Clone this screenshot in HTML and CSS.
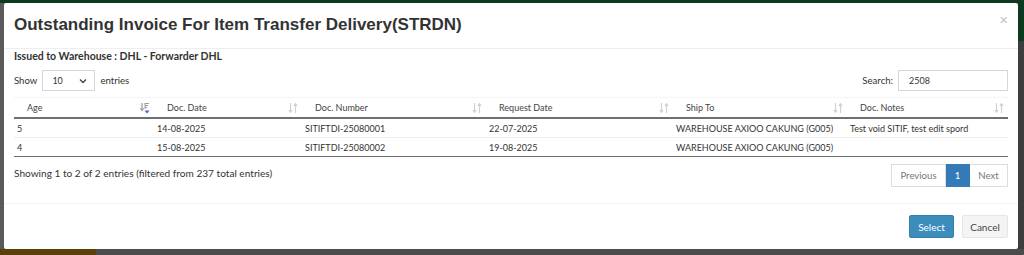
FILE: index.html
```html
<!DOCTYPE html>
<html>
<head>
<meta charset="utf-8">
<link rel="stylesheet" href="styles.css">
</head>
<body>
<div class="page">
  <div class="page-topbar"></div>
  <div class="page-mid">
    <div class="page-left"></div>
    <div class="page-right"><div class="page-right-top"></div></div>
  </div>
  <div class="page-bottom"><div class="page-brown"></div></div>
</div>

<div class="modal">
  <div class="modal-header">
    <h4 class="modal-title">Outstanding Invoice For Item Transfer Delivery(STRDN)</h4>
    <span class="close">×</span>
  </div>
  <div class="modal-body">
    <div class="issued">Issued to Warehouse : DHL - Forwarder DHL</div>
    <div class="controls">
      <div class="length">
        <span>Show</span>
        <div class="select"><span>10</span>
          <svg class="chev" width="8" height="6" viewBox="0 0 8 6"><path d="M1 1.5 L4 4.5 L7 1.5" fill="none" stroke="#444" stroke-width="1.4"/></svg>
        </div>
        <span>entries</span>
      </div>
      <div class="search">
        <span>Search:</span>
        <div class="input">2508</div>
      </div>
    </div>
    <table class="grid">
      <colgroup>
        <col style="width:140px"><col style="width:148px"><col style="width:184px"><col style="width:187px"><col style="width:174px"><col style="width:161px">
      </colgroup>
      <thead>
        <tr>
          <th><span>Age</span>
            <svg class="sort" width="10" height="12" viewBox="0 0 10 12"><path d="M2 1 V8" stroke="#9a9a9a" stroke-width="1.2"/><path d="M0.3 6.2 L2 8.6 L3.7 6.2" fill="none" stroke="#9a9a9a" stroke-width="1.1"/><path d="M5 1.5 H9 M5 3.5 H8 M5 5.5 H7 M5 1 V7" stroke="#9a9a9a" stroke-width="1"/><path d="M4.5 8.5 H9.5 L7 11.5 Z" fill="#4a5fd0"/></svg>
          </th>
          <th><span>Doc. Date</span><svg class="sort" width="10" height="12" viewBox="0 0 10 12"><path d="M2.5 1 V10 M0.8 8 L2.5 10.3 L4.2 8 M7.5 11 V2 M5.8 4 L7.5 1.7 L9.2 4" fill="none" stroke="#cfcfcf" stroke-width="1.1"/></svg></th>
          <th><span>Doc. Number</span><svg class="sort" width="10" height="12" viewBox="0 0 10 12"><path d="M2.5 1 V10 M0.8 8 L2.5 10.3 L4.2 8 M7.5 11 V2 M5.8 4 L7.5 1.7 L9.2 4" fill="none" stroke="#cfcfcf" stroke-width="1.1"/></svg></th>
          <th><span>Request Date</span><svg class="sort" width="10" height="12" viewBox="0 0 10 12"><path d="M2.5 1 V10 M0.8 8 L2.5 10.3 L4.2 8 M7.5 11 V2 M5.8 4 L7.5 1.7 L9.2 4" fill="none" stroke="#cfcfcf" stroke-width="1.1"/></svg></th>
          <th><span>Ship To</span><svg class="sort" width="10" height="12" viewBox="0 0 10 12"><path d="M2.5 1 V10 M0.8 8 L2.5 10.3 L4.2 8 M7.5 11 V2 M5.8 4 L7.5 1.7 L9.2 4" fill="none" stroke="#cfcfcf" stroke-width="1.1"/></svg></th>
          <th><span>Doc. Notes</span><svg class="sort" width="10" height="12" viewBox="0 0 10 12"><path d="M2.5 1 V10 M0.8 8 L2.5 10.3 L4.2 8 M7.5 11 V2 M5.8 4 L7.5 1.7 L9.2 4" fill="none" stroke="#cfcfcf" stroke-width="1.1"/></svg></th>
        </tr>
      </thead>
      <tbody>
        <tr>
          <td>5</td><td>14-08-2025</td><td>SITIFTDI-25080001</td><td>22-07-2025</td><td>WAREHOUSE AXIOO CAKUNG (G005)</td><td>Test void SITIF, test edit spord</td>
        </tr>
        <tr>
          <td>4</td><td>15-08-2025</td><td>SITIFTDI-25080002</td><td>19-08-2025</td><td>WAREHOUSE AXIOO CAKUNG (G005)</td><td></td>
        </tr>
      </tbody>
    </table>
    <div class="info-row">
      <div class="info">Showing 1 to 2 of 2 entries (filtered from 237 total entries)</div>
      <div class="pager">
        <span class="pg">Previous</span><span class="pg active">1</span><span class="pg">Next</span>
      </div>
    </div>
  </div>
  <div class="modal-footer">
    <button class="btn btn-primary">Select</button>
    <button class="btn btn-default">Cancel</button>
  </div>
</div>
</body>
</html>
```

FILE: styles.css
```css
html, body {
  margin: 0;
  padding: 0;
}
body {
  width: 1024px;
  height: 255px;
  overflow: hidden;
  background: #464646;
  font-family: "Lato", "Open Sans", sans-serif;
  font-size: 11px;
  color: #333;
  position: relative;
}
.page {
  height: 255px;
  display: flex;
  flex-direction: column;
}
.page-topbar {
  height: 3px;
  background: #0c3a1f;
}
.page-mid {
  flex: 1;
  display: flex;
  justify-content: space-between;
}
.page-left {
  width: 10px;
  background: #5a5a5a;
}
.page-right {
  width: 8px;
  background: #3d3d3d;
}
.page-right-top {
  height: 38px;
  background: #0c3a1f;
}
.page-bottom {
  height: 6px;
  background: #4b4b4b;
}
.page-brown {
  width: 96px;
  height: 6px;
  background: #5a3e0c;
}
.modal {
  position: absolute;
  left: 4px;
  top: 3px;
  width: 1014px;
  height: 246px;
  background: #fff;
  border-radius: 2px;
  display: flex;
  flex-direction: column;
}
.modal-header {
  height: 45px;
  border-bottom: 1px solid #eeeeee;
  display: flex;
  align-items: flex-start;
  justify-content: space-between;
  padding: 0 10px;
}
.modal-title {
  margin: 0;
  padding-top: 11px;
  font-family: "Liberation Sans", Arial, sans-serif;
  font-weight: bold;
  font-size: 17px;
  line-height: 22px;
  color: #333;
}
.close {
  margin-top: 9px;
  margin-right: 0;
  font-family: "Liberation Sans", Arial, sans-serif;
  font-size: 15px;
  line-height: 15px;
  color: #c4c4c4;
}
.modal-body {
  padding: 0 10px;
  height: 154px;
  border-bottom: 1px solid #f4f4f4;
}
.issued {
  font-weight: bold;
  font-size: 10.5px;
  line-height: 14px;
  color: #333;
}
.controls {
  margin-top: 7px;
  height: 21px;
  display: flex;
  justify-content: space-between;
  align-items: center;
  font-size: 9.6px;
}
.length, .search {
  display: flex;
  align-items: center;
  gap: 5px;
}
.select {
  width: 53px;
  height: 21px;
  box-sizing: border-box;
  border: 1px solid #d2d6de;
  display: flex;
  align-items: center;
  justify-content: space-between;
  padding: 0 7px 0 9px;
  font-size: 9px;
}
.search {
  gap: 5px;
}
.input {
  width: 110px;
  height: 21px;
  box-sizing: border-box;
  border: 1px solid #d2d6de;
  padding-left: 10px;
  line-height: 19px;
  font-size: 9px;
}
.grid {
  margin-top: 6px;
  width: 994px;
  border-collapse: collapse;
  table-layout: fixed;
}
.grid th {
  height: 19px;
  padding: 0 4px 0 13px;
  font-weight: normal;
  font-size: 9px;
  color: #444;
  text-align: left;
  border-top: 1px solid #f4f4f4;
  border-bottom: 2px solid #6f6f6f;
  white-space: nowrap;
}
.grid th span {
  vertical-align: middle;
}
.grid th .sort {
  float: right;
  margin-top: 1px;
}
.grid td {
  height: 18px;
  padding: 0 3px;
  font-size: 9px;
  color: #333;
  border-top: 1px solid #efefef;
  white-space: nowrap;
}
.grid tbody tr:last-child td {
  border-bottom: 1px solid #6f6f6f;
}
.info-row {
  margin-top: 7px;
  display: flex;
  justify-content: space-between;
  align-items: flex-start;
}
.info {
  padding-top: 2px;
  line-height: 14px;
  font-size: 10.1px;
  color: #333;
}
.pager {
  display: flex;
  height: 23px;
}
.pg {
  box-sizing: border-box;
  height: 23px;
  line-height: 21px;
  border: 1px solid #ddd;
  padding: 0 8px;
  color: #777;
  font-size: 9.6px;
}
.pg:first-child {
  width: 55px;
  padding: 0;
  text-align: center;
}
.pg:last-child {
  width: 38px;
  padding: 0;
  text-align: center;
}
.pg + .pg {
  border-left: none;
}
.pg.active {
  background: #337ab7;
  border-color: #337ab7;
  color: #fff;
  width: 24px;
  padding: 0;
  text-align: center;
}
.modal-footer {
  padding: 11px 10px 0;
  display: flex;
  justify-content: flex-end;
  gap: 8px;
}
.btn {
  height: 23px;
  box-sizing: border-box;
  font-family: "Lato", "Open Sans", sans-serif;
  font-size: 10px;
  border-radius: 2px;
  padding: 0;
  cursor: pointer;
}
.btn-primary {
  background: #3c8dbc;
  border: 1px solid #367fa9;
  color: #fff;
  width: 45px;
}
.btn-default {
  background: #f4f4f4;
  border: 1px solid #e6e6e6;
  color: #444;
  width: 46px;
}
```
